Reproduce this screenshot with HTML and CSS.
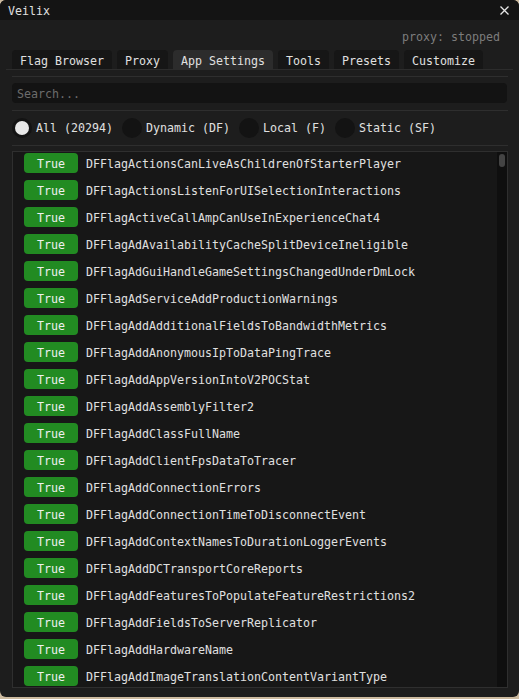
FILE: index.html
```html
<!DOCTYPE html>
<html lang="en">
<head>
    <meta charset="UTF-8">
    <meta name="viewport" content="width=device-width, initial-scale=1.0">
    <title>Veilix</title>
    <link rel="stylesheet" href="styles.css">
</head>
<body>
    <div class="window">
        <div class="title-bar">
            <span class="title">Veilix</span>
            <svg class="close" width="9" height="9" viewBox="0 0 9 9">
                <path d="M0.5 0.5 L8.5 8.5 M8.5 0.5 L0.5 8.5" stroke="#e6e6e6" stroke-width="1.3"/>
            </svg>
        </div>

        <div class="status-row">proxy: stopped</div>

        <div class="tab-bar">
            <div class="tab">Flag Browser</div>
            <div class="tab">Proxy</div>
            <div class="tab active">App Settings</div>
            <div class="tab">Tools</div>
            <div class="tab">Presets</div>
            <div class="tab">Customize</div>
        </div>

        <div class="separator sep-tabs"></div>

        <div class="search">Search...</div>

        <div class="separator"></div>

        <!-- flag type filter -->
        <div class="radio-row">
            <div class="radio-item">
                <div class="radio selected"><div class="dot"></div></div>
                <span>All (20294)</span>
            </div>
            <div class="radio-item">
                <div class="radio"></div>
                <span>Dynamic (DF)</span>
            </div>
            <div class="radio-item">
                <div class="radio"></div>
                <span>Local (F)</span>
            </div>
            <div class="radio-item">
                <div class="radio"></div>
                <span>Static (SF)</span>
            </div>
        </div>

        <div class="separator"></div>

        <div class="flag-list">
            <div class="flag-rows">
                <div class="flag-row"><div class="value-btn">True</div><span>DFFlagActionsCanLiveAsChildrenOfStarterPlayer</span></div>
                <div class="flag-row"><div class="value-btn">True</div><span>DFFlagActionsListenForUISelectionInteractions</span></div>
                <div class="flag-row"><div class="value-btn">True</div><span>DFFlagActiveCallAmpCanUseInExperienceChat4</span></div>
                <div class="flag-row"><div class="value-btn">True</div><span>DFFlagAdAvailabilityCacheSplitDeviceIneligible</span></div>
                <div class="flag-row"><div class="value-btn">True</div><span>DFFlagAdGuiHandleGameSettingsChangedUnderDmLock</span></div>
                <div class="flag-row"><div class="value-btn">True</div><span>DFFlagAdServiceAddProductionWarnings</span></div>
                <div class="flag-row"><div class="value-btn">True</div><span>DFFlagAddAdditionalFieldsToBandwidthMetrics</span></div>
                <div class="flag-row"><div class="value-btn">True</div><span>DFFlagAddAnonymousIpToDataPingTrace</span></div>
                <div class="flag-row"><div class="value-btn">True</div><span>DFFlagAddAppVersionIntoV2POCStat</span></div>
                <div class="flag-row"><div class="value-btn">True</div><span>DFFlagAddAssemblyFilter2</span></div>
                <div class="flag-row"><div class="value-btn">True</div><span>DFFlagAddClassFullName</span></div>
                <div class="flag-row"><div class="value-btn">True</div><span>DFFlagAddClientFpsDataToTracer</span></div>
                <div class="flag-row"><div class="value-btn">True</div><span>DFFlagAddConnectionErrors</span></div>
                <div class="flag-row"><div class="value-btn">True</div><span>DFFlagAddConnectionTimeToDisconnectEvent</span></div>
                <div class="flag-row"><div class="value-btn">True</div><span>DFFlagAddContextNamesToDurationLoggerEvents</span></div>
                <div class="flag-row"><div class="value-btn">True</div><span>DFFlagAddDCTransportCoreReports</span></div>
                <div class="flag-row"><div class="value-btn">True</div><span>DFFlagAddFeaturesToPopulateFeatureRestrictions2</span></div>
                <div class="flag-row"><div class="value-btn">True</div><span>DFFlagAddFieldsToServerReplicator</span></div>
                <div class="flag-row"><div class="value-btn">True</div><span>DFFlagAddHardwareName</span></div>
                <div class="flag-row"><div class="value-btn">True</div><span>DFFlagAddImageTranslationContentVariantType</span></div>
            </div>
            <div class="scrollbar">
                <div class="scroll-grab"></div>
            </div>
        </div>
    </div>
</body>
</html>
```

FILE: styles.css
```css
html, body {
    margin: 0;
    padding: 0;
    width: 519px;
    height: 699px;
    overflow: hidden;
    background-color: #cdbba0;
}

.window {
    width: 519px;
    height: 697px;
    background-color: #1d1d1d;
    border-radius: 6px;
    overflow: hidden;
    display: flex;
    flex-direction: column;
    font-family: "DejaVu Sans Mono", monospace;
    font-size: 11.63px;
    color: #e0e0e0;
}

.title-bar {
    height: 20px;
    flex-shrink: 0;
    background-color: #141414;
    display: flex;
    align-items: center;
    justify-content: space-between;
    padding: 0 10px 0 8px;
}

.title {
    line-height: 20px;
    padding-top: 1px;
}

.close {
    display: block;
}

.status-row {
    margin-top: 8px;
    height: 18px;
    line-height: 19px;
    text-align: right;
    padding-right: 19px;
    color: #7c7c7c;
}

.tab-bar {
    margin: 4px 6px 0 6px;
    padding-left: 6px;
    display: flex;
    gap: 5px;
    border-bottom: 1px solid #2c2c2c;
}

.tab {
    height: 19px;
    line-height: 23px;
    padding: 0 8px;
    background-color: #161616;
    border-radius: 4px 4px 0 0;
}

.tab.active {
    background-color: #2c2c2c;
}

.separator {
    height: 1px;
    margin: 7px 11px 0 12px;
    background-color: #2e2e2e;
}

.sep-tabs {
    margin-top: 6px;
}

.search {
    margin: 6px 12px 0 12px;
    height: 20px;
    line-height: 23px;
    padding-left: 5px;
    background-color: #131313;
    border-radius: 4px;
    color: #6c6c6c;
}

.radio-row {
    margin: 7px 12px 0 12px;
    display: flex;
    gap: 9px;
}

.radio-item {
    display: flex;
    align-items: center;
    gap: 4px;
    height: 20px;
    line-height: 23px;
}

.radio {
    width: 20px;
    height: 20px;
    border-radius: 50%;
    background-color: #131313;
    display: flex;
    justify-content: center;
    align-items: center;
}

.dot {
    width: 14px;
    height: 14px;
    border-radius: 50%;
    background-color: #e8e8e8;
}

.flag-list {
    margin: 5px 11px 0 12px;
    height: 535px;
    border: 1px solid #2f2f2f;
    background-color: #171717;
    display: flex;
}

.flag-rows {
    flex-grow: 1;
    padding: 1px 0 0 11px;
    display: flex;
    flex-direction: column;
    gap: 7px;
    overflow: hidden;
}

.flag-row {
    display: flex;
    gap: 8px;
    height: 20px;
    line-height: 22px;
    flex-shrink: 0;
    white-space: nowrap;
}

.flag-row span {
    height: 20px;
}

.value-btn {
    width: 54px;
    height: 20px;
    text-align: center;
    background-color: #228b22;
    border-radius: 4px;
    color: #f0f0f0;
}

.scrollbar {
    width: 10px;
    flex-shrink: 0;
    background-color: #0f0f0f;
    padding: 2px 2px 0 2px;
    box-sizing: border-box;
}

.scroll-grab {
    width: 6px;
    height: 13px;
    background-color: #444;
    border-radius: 3px;
}
```
